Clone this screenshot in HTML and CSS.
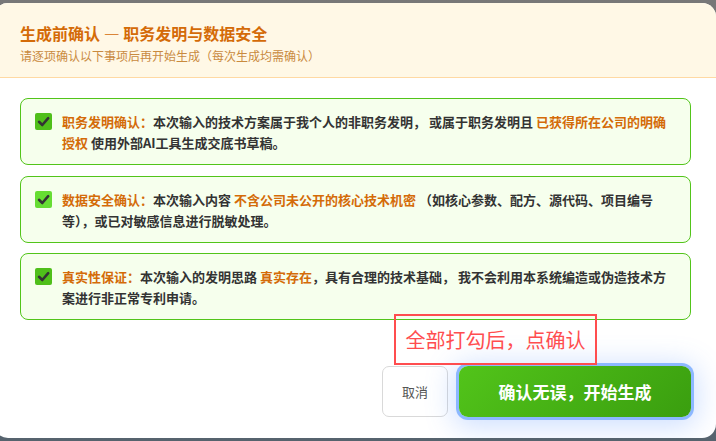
FILE: index.html
```html
<!DOCTYPE html>
<html lang="zh">
<head>
<meta charset="utf-8">
<title>生成前确认</title>
<link rel="stylesheet" href="styles.css">
</head>
<body>
<div class="dialog">
  <div class="header">
    <div class="title">生成前确认 — 职务发明与数据安全</div>
    <div class="subtitle">请逐项确认以下事项后再开始生成（每次生成均需确认）</div>
  </div>
  <div class="body">
    <div class="card">
      <span class="check"><svg viewBox="0 0 17 17" width="17" height="17"><path d="M4 8.8 L7.3 12 L13.2 5.2" fill="none" stroke="#333" stroke-width="2.6" stroke-linecap="round" stroke-linejoin="round"/></svg></span>
      <p class="text"><b class="hl">职务发明确认：</b>本次输入的技术方案属于我个人的非职务发明， 或属于职务发明且 <b class="hl">已获得所在公司的明确授权</b> 使用外部AI工具生成交底书草稿。</p>
    </div>
    <div class="card">
      <span class="check light"><svg viewBox="0 0 17 17" width="17" height="17"><path d="M4 8.8 L7.3 12 L13.2 5.2" fill="none" stroke="#333" stroke-width="2.6" stroke-linecap="round" stroke-linejoin="round"/></svg></span>
      <p class="text"><b class="hl">数据安全确认：</b>本次输入内容 <b class="hl">不含公司未公开的核心技术机密</b> （如核心参数、配方、源代码、项目编号等），或已对敏感信息进行脱敏处理。</p>
    </div>
    <div class="card">
      <span class="check"><svg viewBox="0 0 17 17" width="17" height="17"><path d="M4 8.8 L7.3 12 L13.2 5.2" fill="none" stroke="#333" stroke-width="2.6" stroke-linecap="round" stroke-linejoin="round"/></svg></span>
      <p class="text"><b class="hl">真实性保证：</b>本次输入的发明思路 <b class="hl">真实存在</b>，具有合理的技术基础， 我不会利用本系统编造或伪造技术方案进行非正常专利申请。</p>
    </div>
  </div>
  <div class="footer">
    <button class="btn cancel">取消</button>
    <button class="btn primary">确认无误，开始生成</button>
  </div>
  <div class="note">全部打勾后，点确认</div>
</div>
</body>
</html>
```
FILE: styles.css
```css
* { box-sizing: border-box; }
html, body { margin: 0; height: 100%; }
body {
  background: linear-gradient(#787878, #56636e);
  font-family: "Noto Sans CJK SC", "Noto Sans", sans-serif;
  overflow: hidden;
  padding-top: 3px;
}
.dialog {
  position: relative;
  margin-left: -6px;
  width: 722px;
  height: 435px;
  background: #fff;
  border-radius: 14px;
  overflow: hidden;
}
.header {
  background: #fff8e6;
  border-bottom: 1px solid #ffd9a3;
  padding: 19px 26px 12px 26px;
}
.title {
  font-size: 16px;
  line-height: 22px;
  font-weight: 700;
  color: #d46b08;
}
.subtitle {
  margin-top: 3px;
  font-size: 12px;
  line-height: 18px;
  color: #c98a3f;
}
.body {
  padding: 20px 25px 0 26px;
  display: flex;
  flex-direction: column;
  gap: 10.5px;
}
.card {
  display: flex;
  align-items: flex-start;
  gap: 10px;
  height: 67px;
  padding: 12px 14px 11px 14px;
  border: 1px solid #52c41a;
  border-radius: 8px;
  background: #f6ffed;
}
.check {
  flex: none;
  width: 17px;
  height: 17px;
  margin-top: 2px;
  border-radius: 2px;
  background: #4fbf1a;
  display: flex;
}
.check.light { background: #66dd33; }
.text {
  margin: 0;
  font-size: 13px;
  line-height: 21px;
  font-weight: 600;
  color: #333;
}
.hl { color: #d46b08; font-weight: 700; }
.footer {
  display: flex;
  justify-content: flex-end;
  gap: 11px;
  padding: 46px 25px 0 0;
}
.btn {
  font-family: inherit;
  height: 51px;
  border-radius: 7px;
  cursor: pointer;
}
.cancel {
  width: 66px;
  background: #fff;
  border: 1px solid #d9d9d9;
  color: #555;
  font-size: 13px;
}
.primary {
  width: 232px;
  border: none;
  border-radius: 9px;
  background: linear-gradient(135deg, #52c41a, #3a9e0f);
  color: #fff;
  font-size: 17px;
  font-weight: 700;
  box-shadow: 0 0 0 3px #8cb8ff, 0 4px 28px 6px rgba(80, 140, 255, 0.28);
}
.note {
  position: absolute;
  left: 400px;
  top: 311px;
  width: 203px;
  height: 51px;
  border: 2px solid #ff4d4f;
  color: #ff4d4f;
  font-size: 20px;
  display: flex;
  align-items: center;
  justify-content: center;
}
```
